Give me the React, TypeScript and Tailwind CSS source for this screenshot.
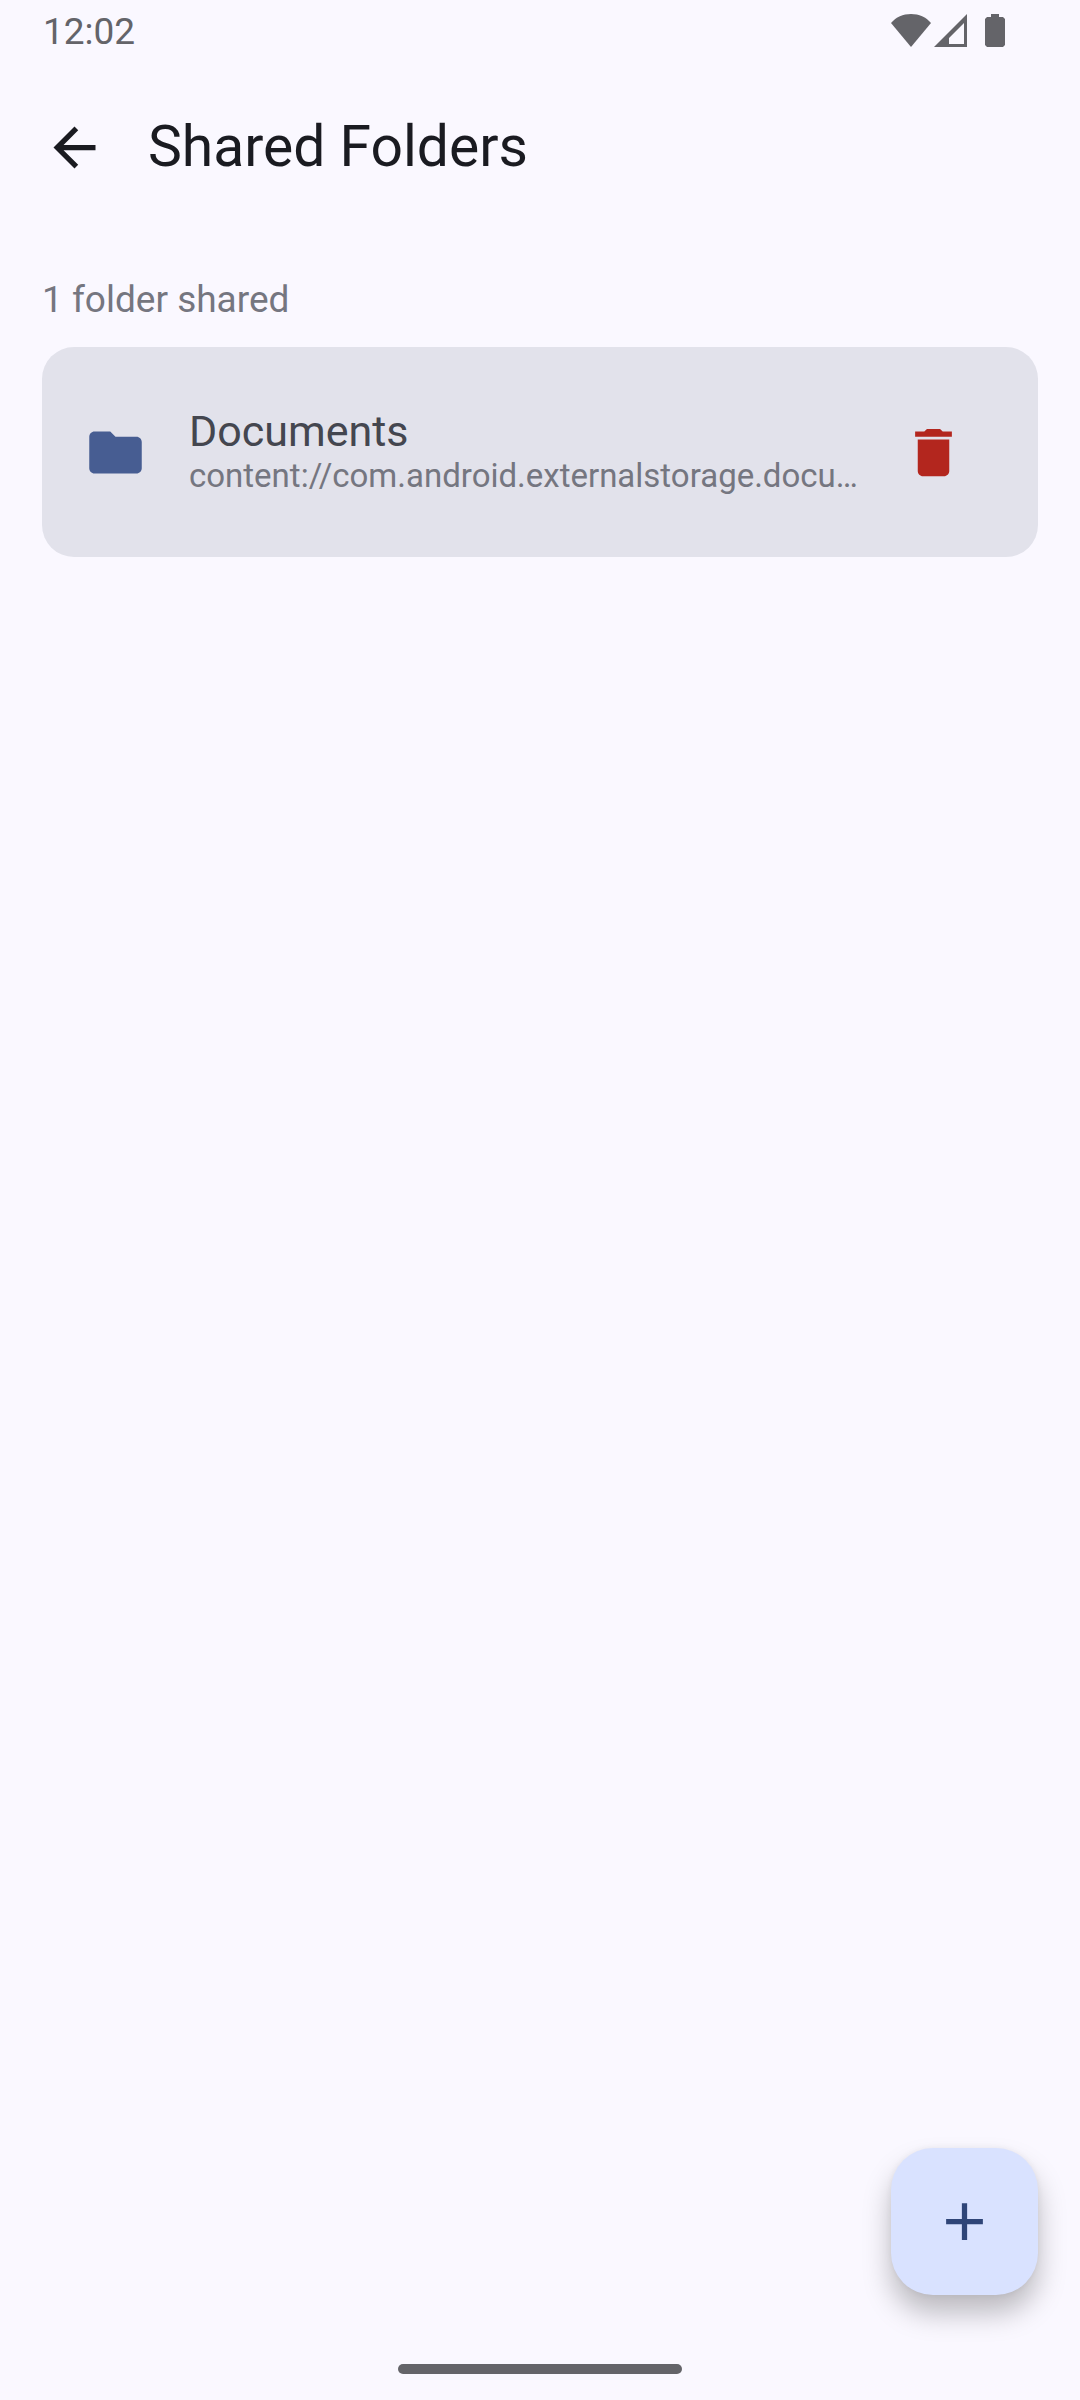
import React from 'react';
import { MdAdd, MdArrowBack, MdDelete, MdFolder } from 'react-icons/md';

interface SharedFolder {
  name: string;
  uri: string;
}

const folders: SharedFolder[] = [
  { name: 'Documents', uri: 'content://com.android.externalstorage.docu…' },
];

const StatusBar: React.FC = () => (
  <div className="flex h-[63px] items-center justify-between pr-[75px] pl-[43px] text-[#646469]">
    <span className="text-[37px] leading-[63px]">12:02</span>
    <div className="flex items-center gap-[3px] pb-[2px]">
      {/* Wifi */}
      <svg className="h-[33px] w-[40px]" viewBox="0 0 40 33" fill="currentColor" aria-hidden="true">
        <path d="M20 33L0 9C5 3 12 0 20 0s15 3 20 9L20 33z" />
      </svg>
      {/* Signal */}
      <svg className="h-[33px] w-[33px]" viewBox="0 0 33 33" fill="currentColor" fillRule="evenodd" aria-hidden="true">
        <path d="M0 33L33 0v33H0zM15 30h15V9L15 24z" />
      </svg>
      {/* Battery */}
      <svg className="ml-[15px] h-[33px] w-[20px]" viewBox="0 0 20 33" fill="currentColor" aria-hidden="true">
        <path d="M6 0h8v3h4l2 2v26l-2 2H2l-2-2V5l2-2h4z" />
      </svg>
    </div>
  </div>
);

const FolderCard: React.FC<{ folder: SharedFolder }> = ({ folder }) => (
  <li className="flex h-[210px] items-center rounded-[32px] bg-[#e2e2eb] px-[42px]">
    <MdFolder className="size-[63px] shrink-0 text-[#475d92]" aria-hidden="true" />
    <div className="min-w-0 flex-1 pl-[42px]">
      <h2 className="truncate text-[43px] leading-[48px] text-[#44464f]">{folder.name}</h2>
      <p className="truncate text-[33px] leading-[42px] text-[#757680]">{folder.uri}</p>
    </div>
    <button type="button" aria-label="Remove folder" className="flex size-[126px] shrink-0 items-center justify-center text-[#b3261e]">
      <MdDelete className="size-[63px]" />
    </button>
  </li>
);

const App: React.FC = () => {
  return (
    <div className="flex min-h-screen flex-col bg-[#faf8ff] font-['Roboto',sans-serif]">
      <StatusBar />

      <header className="flex h-[168px] items-center gap-[42px] px-[43px] text-[#1a1b21]">
        <button type="button" aria-label="Back">
          <MdArrowBack className="size-[63px]" />
        </button>
        <h1 className="text-[57px] leading-[74px]">Shared Folders</h1>
      </header>

      <main className="flex-1 px-[42px] pt-[42px]">
        <p className="mb-[21px] text-[37px] leading-[53px] text-[#757680]">{folders.length} folder shared</p>
        <ul className="space-y-[21px]">
          {folders.map(folder => (
            <FolderCard key={folder.name} folder={folder} />
          ))}
        </ul>
      </main>

      <div className="flex justify-end px-[42px] pb-[69px]">
        <button
          type="button"
          aria-label="Add folder"
          className="flex size-[147px] items-center justify-center rounded-[42px] bg-[#d9e2ff] text-[#2f4578] shadow-[0_18px_28px_rgba(0,0,0,0.25),0_0_6px_rgba(0,0,0,0.06)]"
        >
          <MdAdd className="size-[63px]" />
        </button>
      </div>

      {/* Gesture bar */}
      <div className="flex justify-center pb-[26px]">
        <div className="h-[10px] w-[284px] rounded-full bg-[#646469]" />
      </div>
    </div>
  );
};

export default App;
